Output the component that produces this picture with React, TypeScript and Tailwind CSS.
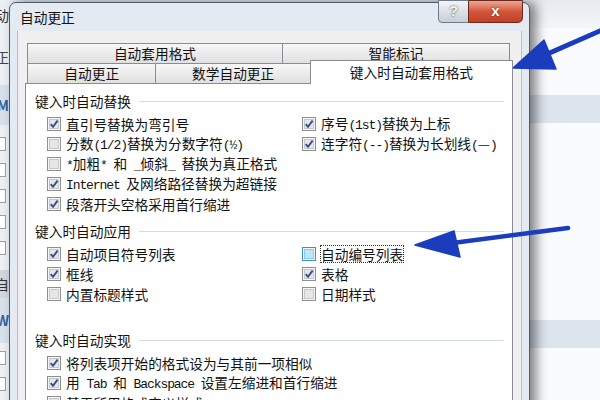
import React from 'react';

// SimSun-ish half-width latin runs
function M({ children }: { children: React.ReactNode }) {
  return <span className="font-['Liberation_Mono',monospace] text-[13px] tracking-[-1.1px]">{children}</span>;
}

function Check({ on, hot }: { on?: boolean; hot?: boolean }) {
  return (
    <svg width="14" height="14" viewBox="0 0 14 14" className="shrink-0">
      <rect x="0.5" y="0.5" width="13" height="13" fill="#f6f6f6" stroke={hot ? '#3d8ec9' : '#8f8f8f'} />
      <rect x="2.5" y="2.5" width="9" height="9" fill={hot ? '#c3e5f9' : '#e4e6ea'} stroke={hot ? '#8ccaf0' : '#c6c8cc'} />
      {on && <path d="M3.7 7.1 L6 9.8 L10.6 3.6" fill="none" stroke="#3a4d8a" strokeWidth="1.9" />}
    </svg>
  );
}

function Opt({ on, hot, children }: { on?: boolean; hot?: boolean; children: React.ReactNode }) {
  return (
    <div className="flex h-[20px] items-center gap-[5px]">
      <Check on={on} hot={hot} />
      <span className={hot ? '-ml-px border border-dotted border-[#333] leading-[16px]' : 'leading-[20px]'}>{children}</span>
    </div>
  );
}

function Group({ title, className }: { title: string; className?: string }) {
  return (
    <div className={`flex h-[20px] items-center pr-[8px] ${className ?? ''}`}>
      <span className="pl-[9px]">{title}</span>
      <div className="ml-[8px] h-px flex-1 bg-[#d5dde4]" />
    </div>
  );
}

const tab = 'flex items-center justify-center border border-[#898c95] bg-linear-to-b from-[#f7f7f7] to-[#e0e0e0]';

function LeftStrip() {
  return (
    <div className="flex w-[9px] flex-col overflow-hidden bg-[#eceff3] text-[14px]">
      <div className="flex h-[30px] items-center justify-end text-[#333]">动</div>
      <div className="flex h-[55px] items-center justify-end text-[#444]">正</div>
      <div className="flex h-[40px] items-center justify-end bg-[#d7e1ec] font-bold text-[#3a5f9e]">M</div>
      <div className="flex h-[145px] flex-col gap-[12px] pt-[12px]">
        <div className="h-[14px] w-[6px] border border-l-0 border-[#9aa3ad] bg-white" />
        <div className="h-[14px] w-[6px] border border-l-0 border-[#9aa3ad] bg-white" />
        <div className="h-[14px] w-[6px] border border-l-0 border-[#9aa3ad] bg-white" />
        <div className="h-[14px] w-[6px] border border-l-0 border-[#9aa3ad] bg-white" />
        <div className="h-[14px] w-[6px] border border-l-0 border-[#9aa3ad] bg-white" />
      </div>
      <div className="flex h-[28px] items-center justify-end bg-[#d3d6da] text-[#333]">自</div>
      <div className="flex h-[45px] items-center justify-end bg-[#d7e1ec] font-bold text-[#3a5f9e]">W</div>
      <div className="flex flex-col gap-[12px] pt-[8px]">
        <div className="h-[14px] w-[6px] border border-l-0 border-[#9aa3ad] bg-white" />
        <div className="h-[14px] w-[6px] border border-l-0 border-[#9aa3ad] bg-white" />
      </div>
    </div>
  );
}

export default function App() {
  return (
    <div className="relative h-[400px] w-[600px] overflow-hidden bg-[#fafbfc] font-['Noto_Sans_CJK_SC','Noto_Sans',sans-serif] text-[13.7px] text-[#111]">
      {/* the Word window behind */}
      <div className="flex h-full">
        <LeftStrip />
        <div className="flex flex-1 flex-col">
          <div className="h-[28px] bg-linear-to-b from-[#e6eaef] to-[#f4f6f8]" />
          <div className="h-[67px]" />
          <div className="h-[28px] bg-[#dce4ed]" />
          <div className="h-[197px]" />
          <div className="h-[28px] bg-[#dce4ed]" />
        </div>
      </div>

      {/* dialog */}
      <div className="absolute left-[9px] top-[2px] h-[430px] w-[521px] rounded-t-[7px] border border-[#4e5b6a] bg-[#e4eaf1] shadow-[6px_0_12px_rgba(0,0,0,0.5)]">
        <div className="flex h-[28px] items-start justify-between">
          <span className="ml-[10px] mt-[4px] leading-[20px]">自动更正</span>
          <div className="-mt-[3px] mr-[6px] flex">
            <div className="flex h-[23px] w-[31px] items-center justify-center rounded-bl-[4px] border border-[#6f7a88] bg-linear-to-b from-[#f2f4f7] to-[#c7ced6] font-['Liberation_Sans',sans-serif] text-[15px] font-bold text-[#f4f4f4] [text-shadow:0_0_2px_#333]">
              ?
            </div>
            <div className="-ml-px flex h-[23px] w-[55px] items-center justify-center rounded-br-[5px] border border-[#6b2a1f] bg-linear-to-b from-[#eba593] via-[#d4563a] to-[#c23f22] font-['Liberation_Sans',sans-serif] text-[15px] font-bold text-white [text-shadow:0_0_2px_#4a1208]">
              x
            </div>
          </div>
        </div>

        <div className="mx-[7px] h-[400px] border-x border-[#b6c0ca] bg-[#f0f0f0] px-[7px] pt-[12px]">
          <div className="w-[488px]">
            <div className="flex h-[20px] pl-[2px]">
              <div className={`${tab} w-[256px] border-b-0`}>自动套用格式</div>
              <div className={`${tab} -ml-px w-[228px] border-b-0`}>智能标记</div>
            </div>
            <div className="flex h-[20px] items-end pl-[2px]">
              <div className={`${tab} h-[20px] w-[130px] border-b-0`}>自动更正</div>
              <div className={`${tab} -ml-px h-[20px] w-[156px] border-b-0`}>数学自动更正</div>
              <div className="relative z-10 -mb-px -ml-px flex h-[24px] w-[204px] items-center justify-center border border-b-0 border-[#898c95] bg-white">
                键入时自动套用格式
              </div>
            </div>

            <div className="h-[340px] border border-[#898c95] bg-white pt-[7px]">
              <Group title="键入时自动替换" />
              <div className="mt-[3px] flex pl-[21px]">
                <div className="w-[255px]">
                  <Opt on>直引号替换为弯引号</Opt>
                  <Opt>分数<M>(1/2)</M>替换为分数字符<M>(½)</M></Opt>
                  <Opt><M>*</M>加粗<M>* </M>和<M> _</M>倾斜<M>_ </M>替换为真正格式</Opt>
                  <Opt on><M>Internet </M>及网络路径替换为超链接</Opt>
                  <Opt on>段落开头空格采用首行缩进</Opt>
                </div>
                <div>
                  <Opt on>序号<M>(1st)</M>替换为上标</Opt>
                  <Opt on>连字符<M>(--)</M>替换为长划线<M>(</M>—<M>)</M></Opt>
                </div>
              </div>

              <Group title="键入时自动应用" className="mt-[7px]" />
              <div className="mt-[3px] flex pl-[21px]">
                <div className="w-[255px]">
                  <Opt on>自动项目符号列表</Opt>
                  <Opt on>框线</Opt>
                  <Opt>内置标题样式</Opt>
                </div>
                <div>
                  <Opt hot>自动编号列表</Opt>
                  <Opt on>表格</Opt>
                  <Opt>日期样式</Opt>
                </div>
              </div>

              <Group title="键入时自动实现" className="mt-[26px]" />
              <div className="mt-[3px] pl-[21px]">
                <Opt on>将列表项开始的格式设为与其前一项相似</Opt>
                <Opt on>用<M> Tab </M>和<M> Backspace </M>设置左缩进和首行缩进</Opt>
                <Opt>基于所用格式定义样式</Opt>
              </div>
            </div>
          </div>
        </div>
      </div>

      {/* hand-drawn arrows */}
      <svg className="pointer-events-none absolute inset-0" width="600" height="400" viewBox="0 0 600 400">
        <path d="M602 30 L545 55" stroke="#1b3dbd" strokeWidth="5" strokeLinecap="round" fill="none" />
        <path d="M513 68 L544 40 L556 69 Z" fill="#1b3dbd" stroke="#1b3dbd" strokeWidth="1.5" strokeLinejoin="round" />
        <path d="M568 228 L445 244" stroke="#1b3dbd" strokeWidth="4.5" strokeLinecap="round" fill="none" />
        <path d="M415 245 L454 231 L460 257 Z" fill="#1b3dbd" stroke="#1b3dbd" strokeWidth="1.5" strokeLinejoin="round" />
      </svg>
    </div>
  );
}
